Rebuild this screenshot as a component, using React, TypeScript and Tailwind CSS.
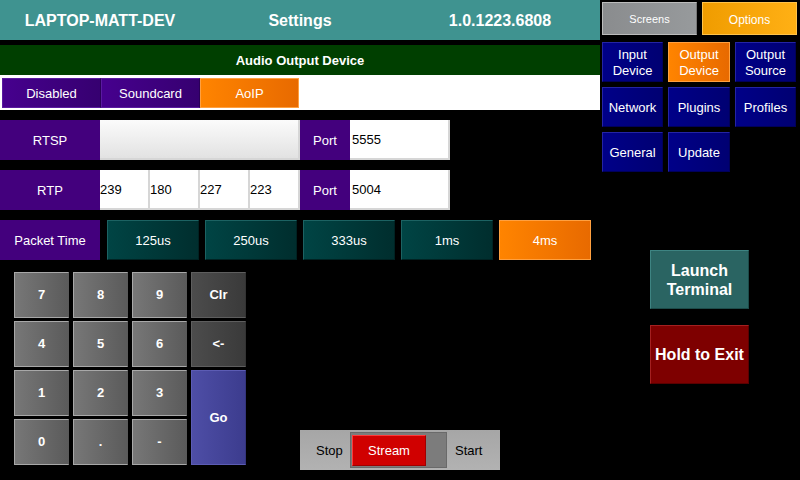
import React from 'react'

const font = "font-['Liberation_Sans',Arial,sans-serif]"

function Purple({ label, w = 'w-[100px]' }: { label: string; w?: string }) {
  return (
    <div className={`${w} h-full flex items-center justify-center pt-[2px] bg-[#43007d] text-white text-[13px]`}>
      {label}
    </div>
  )
}

function Field({ value, w }: { value: string; w: string }) {
  return (
    <div className={`${w} h-full flex items-center pt-[2px] bg-white text-black text-[13px] border-r-2 border-b-2 border-[#d6d6d6]`}>
      {value}
    </div>
  )
}

const packetTimes = ['125us', '250us', '333us', '1ms', '4ms']

const keys: { k: string; cls: string }[] = [
  { k: '7', cls: 'num' }, { k: '8', cls: 'num' }, { k: '9', cls: 'num' }, { k: 'Clr', cls: 'dark' },
  { k: '4', cls: 'num' }, { k: '5', cls: 'num' }, { k: '6', cls: 'num' }, { k: '<-', cls: 'dark' },
  { k: '1', cls: 'num' }, { k: '2', cls: 'num' }, { k: '3', cls: 'num' }, { k: 'Go', cls: 'go' },
  { k: '0', cls: 'num' }, { k: '.', cls: 'num' }, { k: '-', cls: 'num' },
]

const keyStyle: Record<string, string> = {
  num: 'bg-gradient-to-r from-[#777777] to-[#5b5b5b] border border-[#a8a8a8] border-r-[#5a5a5a]',
  dark: 'bg-gradient-to-r from-[#4c4c4c] to-[#3a3a3a] border border-[#5e5e5e] border-r-[#333333]',
  go: 'row-span-2 bg-gradient-to-r from-[#4e4ea6] to-[#3c3c8e] border border-[#5c5cb4] border-r-[#34347c]',
}

const optionButtons = [
  ['Input', 'Device'],
  ['Output', 'Device'],
  ['Output', 'Source'],
  ['Network'],
  ['Plugins'],
  ['Profiles'],
  ['General'],
  ['Update'],
]

export default function App() {
  return (
    <div className={`w-[800px] h-[480px] bg-black flex overflow-hidden ${font}`}>
      {/* left column */}
      <div className="w-[600px] flex flex-col">
        <div className="h-[40px] grid grid-cols-3 pt-[2px] bg-[#3f9390] text-white font-bold text-[16px]">
          <div className="flex items-center justify-center">LAPTOP-MATT-DEV</div>
          <div className="flex items-center justify-center">Settings</div>
          <div className="flex items-center justify-center">1.0.1223.6808</div>
        </div>

        <div className="mt-[5px] h-[30px] flex items-center justify-center pt-[2px] bg-[#003f00] text-white font-bold text-[13px]">
          Audio Output Device
        </div>

        <div className="h-[35px] bg-white flex pt-[3px] pb-[2px] pl-[2px]">
          <div className="w-[99px] flex items-center justify-center pt-[2px] text-white text-[13px] bg-gradient-to-r from-[#46008e] to-[#360070] border border-[#5a1aa0] border-r-[#2a0058]">
            Disabled
          </div>
          <div className="w-[99px] flex items-center justify-center pt-[2px] text-white text-[13px] bg-gradient-to-r from-[#46008e] to-[#360070] border border-[#5a1aa0] border-r-[#2a0058]">
            Soundcard
          </div>
          <div className="w-[99px] flex items-center justify-center pt-[2px] text-white text-[13px] bg-gradient-to-r from-[#ff8400] to-[#e86a00] border border-[#ffa040]">
            AoIP
          </div>
        </div>

        <div className="mt-[10px] h-[40px] flex">
          <Purple label="RTSP" />
          <div className="w-[200px] h-full bg-gradient-to-b from-[#fbfbfb] to-[#e2e2e2] border-r-2 border-b-2 border-[#d6d6d6]" />
          <Purple label="Port" w="w-[50px]" />
          <div className="w-[100px] h-full flex items-center pt-[2px] pl-[2px] bg-white text-black text-[13px] border-r-2 border-b-2 border-[#d6d6d6]">
            5555
          </div>
        </div>

        <div className="mt-[10px] h-[40px] flex">
          <Purple label="RTP" />
          <Field value="239" w="w-[50px]" />
          <Field value="180" w="w-[50px]" />
          <Field value="227" w="w-[50px]" />
          <Field value="223" w="w-[50px]" />
          <Purple label="Port" w="w-[50px]" />
          <div className="w-[100px] h-full flex items-center pt-[2px] pl-[2px] bg-white text-black text-[13px] border-r-2 border-b-2 border-[#d6d6d6]">
            5004
          </div>
        </div>

        <div className="mt-[10px] h-[40px] flex gap-[6px]">
          <div className="w-[100px] mr-[1px] flex items-center justify-center pt-[2px] bg-[#43007d] text-white text-[13px]">
            Packet Time
          </div>
          {packetTimes.map((p) => (
            <div
              key={p}
              className={`w-[92px] flex items-center justify-center pt-[2px] text-white text-[13px] border ${
                p === '4ms'
                  ? 'bg-gradient-to-r from-[#ff8400] to-[#e86a00] border-[#ffa040]'
                  : 'bg-gradient-to-r from-[#004444] to-[#002e2e] border-[#1c6262] border-r-[#002222] border-b-[#002222]'
              }`}
            >
              {p}
            </div>
          ))}
        </div>

        <div className="flex pt-[12px]">
          <div className="ml-[14px] grid grid-cols-[repeat(4,55px)] grid-rows-[repeat(4,46px)] gap-x-[4px] gap-y-[3px]">
            {keys.map(({ k, cls }) => (
              <div
                key={k}
                className={`flex items-center justify-center text-white font-bold text-[13px] ${keyStyle[cls]}`}
              >
                {k}
              </div>
            ))}
          </div>

          <div className="ml-[54px] mt-[158px] w-[200px] h-[40px] flex bg-gradient-to-b from-[#a6a6a6] to-[#b2b2b2] text-black text-[13px]">
            <div className="w-[50px] flex items-center pt-[2px] pl-[16px]">Stop</div>
            <div className="w-[97px] my-[2px] bg-[#7c7c7c] border border-[#6a6a6a] flex items-center px-[1px]">
              <div className="w-[74px] h-[31px] flex items-center justify-center pt-[2px] bg-[#d00000] border border-[#ff3a3a] border-r-[#a00000] border-b-[#a00000] text-white">
                Stream
              </div>
            </div>
            <div className="flex-1 flex items-center pt-[2px] pl-[8px]">Start</div>
          </div>
        </div>
      </div>

      {/* right column */}
      <div className="w-[200px] flex flex-col pt-[2px] pl-[2px]">
        <div className="h-[33px] flex gap-[5px]">
          <div className="w-[95px] flex items-center justify-center pt-[2px] text-white text-[11px] bg-gradient-to-r from-[#8a8c8e] to-[#979a9c] border border-[#bcbcbc] border-r-[#777777]">
            Screens
          </div>
          <div className="w-[95px] flex items-center justify-center pt-[2px] text-white text-[12px] bg-gradient-to-r from-[#f09c00] to-[#ffb014] border border-[#ffc24a]">
            Options
          </div>
        </div>

        <div className="mt-[7px] grid grid-cols-[61px_62px_61px] auto-rows-[40px] gap-x-[5px] gap-y-[5px]">
          {optionButtons.map((lines, i) => (
            <div
              key={i}
              className={`flex flex-col items-center justify-center pt-[2px] text-white text-[13px] leading-[16px] border ${
                i === 1
                  ? 'bg-gradient-to-r from-[#ff8400] to-[#e86a00] border-[#ffa040]'
                  : 'bg-gradient-to-r from-[#000088] to-[#000072] border-[#2424a4] border-r-[#00005a] border-b-[#00005a]'
              }`}
            >
              {lines.map((l) => (
                <span key={l}>{l}</span>
              ))}
            </div>
          ))}
        </div>

        <div className="ml-[48px] mt-[78px] w-[99px] h-[59px] flex flex-col items-center justify-center text-white font-bold text-[16px] leading-[19px] bg-[#2a6462] border border-[#3e8482] border-r-[#1c4a48] border-b-[#1c4a48]">
          <span>Launch</span>
          <span>Terminal</span>
        </div>

        <div className="ml-[48px] mt-[16px] w-[99px] h-[59px] flex items-center justify-center text-white font-bold text-[16px] bg-[#7e0000] border border-[#a42020] border-r-[#5a0000] border-b-[#5a0000]">
          Hold to Exit
        </div>
      </div>
    </div>
  )
}
